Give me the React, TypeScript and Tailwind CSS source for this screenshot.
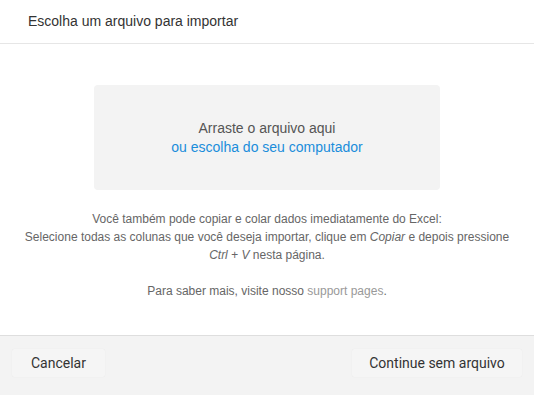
import React from "react";

export default function App() {
  return (
    <div className="w-[534px] h-[395px] bg-white flex flex-col overflow-hidden" style={{ fontFamily: '"Liberation Sans", Arial, sans-serif' }}>
      <div className="h-[44px] shrink-0 border-b border-[#e6e6e6] flex items-center pl-[28px] text-[14px] text-[#333]">
        Escolha um arquivo para importar
      </div>
      <div className="flex-1 flex flex-col items-center pt-[41px]">
        <div className="w-[346px] h-[105px] rounded-[4px] bg-[#f3f3f3] flex flex-col items-center justify-center text-[14px] leading-[19px]">
          <div className="text-[#555]">Arraste o arquivo aqui</div>
          <div className="text-[#1a8ddb] cursor-pointer">ou escolha do seu computador</div>
        </div>
        <div className="mt-[20px] text-center text-[12px] leading-[18px] text-[#666]">
          <div>Você também pode copiar e colar dados imediatamente do Excel:</div>
          <div>
            Selecione todas as colunas que você deseja importar, clique em <i>Copiar</i> e depois pressione
          </div>
          <div>
            <i>Ctrl + V</i> nesta página.
          </div>
          <div className="mt-[18px]">
            Para saber mais, visite nosso <span className="text-[#999]">support pages</span>.
          </div>
        </div>
      </div>
      <div className="h-[60px] shrink-0 border-t border-[#dedede] bg-[#f3f3f3] flex items-start justify-between px-[12px] pt-[13px]" style={{ fontFamily: 'Roboto, "Liberation Sans", sans-serif' }}>
        <button className="h-[28px] w-[93px] bg-[#f5f5f5] rounded-[2px] shadow-[0_0_1px_rgba(0,0,0,0.08)] text-[14px] text-[#333]">
          Cancelar
        </button>
        <button className="h-[28px] w-[170px] bg-[#f5f5f5] rounded-[2px] shadow-[0_0_1px_rgba(0,0,0,0.08)] text-[14px] text-[#333]">
          Continue sem arquivo
        </button>
      </div>
    </div>
  );
}
